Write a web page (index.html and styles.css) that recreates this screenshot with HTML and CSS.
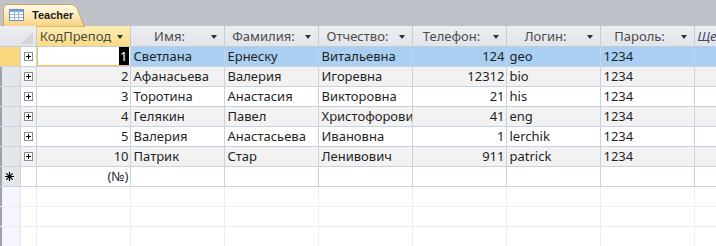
FILE: index.html
```html
<!DOCTYPE html>
<html lang="ru">
<head>
    <meta charset="UTF-8">
    <title>Teacher</title>
    <link rel="stylesheet" href="styles.css">
</head>
<body>
    <div class="tabbar">
        <div class="tab">
            <svg class="tab-bg" width="82" height="23" viewBox="0 0 82 23">
                <defs>
                    <linearGradient id="tabfill" x1="0" y1="0" x2="0" y2="1">
                        <stop offset="0" stop-color="#fefaea"/>
                        <stop offset="0.5" stop-color="#fce9b8"/>
                        <stop offset="1" stop-color="#f8cf7d"/>
                    </linearGradient>
                </defs>
                <path d="M0.5 23 V5 Q0.5 0.5 5 0.5 H68 Q72 0.5 74 4 L81.5 23 Z" fill="url(#tabfill)" stroke="#c9a45c"/>
            </svg>
            <svg class="tab-icon" width="15" height="12" viewBox="0 0 15 12">
                <rect x="0.5" y="0.5" width="14" height="11" fill="#fff" stroke="#6f8fbf"/>
                <rect x="1" y="1" width="13" height="2" fill="#7ea6da"/>
                <path d="M1 5.5 H14 M1 8.5 H14 M5.5 3 V11 M9.5 3 V11" stroke="#9fb6d6"/>
            </svg>
            <span class="tab-title">Teacher</span>
        </div>
    </div>

    <table class="sheet">
        <colgroup>
            <col class="c-rs">
            <col class="c-ex">
            <col class="c-f"><col class="c-f"><col class="c-f"><col class="c-f">
            <col class="c-f"><col class="c-f"><col class="c-f">
            <col class="c-last">
        </colgroup>
        <thead>
            <tr>
                <th class="corner" colspan="2"><span class="corner-tri"></span></th>
                <th class="hl"><div class="hd"><span class="hd-text">КодПрепод</span><span class="arrow"></span></div></th>
                <th><div class="hd"><span class="hd-text">Имя:</span><span class="arrow"></span></div></th>
                <th><div class="hd"><span class="hd-text">Фамилия:</span><span class="arrow"></span></div></th>
                <th><div class="hd"><span class="hd-text">Отчество:</span><span class="arrow"></span></div></th>
                <th><div class="hd"><span class="hd-text">Телефон:</span><span class="arrow"></span></div></th>
                <th><div class="hd"><span class="hd-text">Логин:</span><span class="arrow"></span></div></th>
                <th><div class="hd"><span class="hd-text">Пароль:</span><span class="arrow"></span></div></th>
                <th class="add"><div class="hd add-text">Щелкните для добавления</div></th>
            </tr>
        </thead>
        <tbody>
            <tr class="cur">
                <td class="rs"></td>
                <td class="ex"><span class="plus"></span></td>
                <td class="num active"><span class="caret">1</span></td>
                <td>Светлана</td><td>Ернеску</td><td>Витальевна</td>
                <td class="num">124</td><td>geo</td><td>1234</td><td></td>
            </tr>
            <tr class="alt">
                <td class="rs"></td>
                <td class="ex"><span class="plus"></span></td>
                <td class="num">2</td>
                <td>Афанасьева</td><td>Валерия</td><td>Игоревна</td>
                <td class="num">12312</td><td>bio</td><td>1234</td><td></td>
            </tr>
            <tr>
                <td class="rs"></td>
                <td class="ex"><span class="plus"></span></td>
                <td class="num">3</td>
                <td>Торотина</td><td>Анастасия</td><td>Викторовна</td>
                <td class="num">21</td><td>his</td><td>1234</td><td></td>
            </tr>
            <tr class="alt">
                <td class="rs"></td>
                <td class="ex"><span class="plus"></span></td>
                <td class="num">4</td>
                <td>Гелякин</td><td>Павел</td><td>Христофорович</td>
                <td class="num">41</td><td>eng</td><td>1234</td><td></td>
            </tr>
            <tr>
                <td class="rs"></td>
                <td class="ex"><span class="plus"></span></td>
                <td class="num">5</td>
                <td>Валерия</td><td>Анастасьева</td><td>Ивановна</td>
                <td class="num">1</td><td>lerchik</td><td>1234</td><td></td>
            </tr>
            <tr class="alt">
                <td class="rs"></td>
                <td class="ex"><span class="plus"></span></td>
                <td class="num">10</td>
                <td>Патрик</td><td>Стар</td><td>Ленивович</td>
                <td class="num">911</td><td>patrick</td><td>1234</td><td></td>
            </tr>
            <tr class="new">
                <td class="rs">
                    <svg class="star" width="9" height="9" viewBox="0 0 9 9">
                        <path d="M4.5 0 V9 M0 4.5 H9 M1.3 1.3 L7.7 7.7 M7.7 1.3 L1.3 7.7" stroke="#000" stroke-width="1.2"/>
                    </svg>
                </td>
                <td class="ex"></td>
                <td class="num auto">(№)</td>
                <td></td><td></td><td></td><td></td><td></td><td></td><td></td>
            </tr>
            <tr class="blank">
                <td class="rs"></td><td></td><td></td><td></td><td></td><td></td><td></td><td></td><td></td><td></td>
            </tr>
            <tr class="blank">
                <td class="rs"></td><td></td><td></td><td></td><td></td><td></td><td></td><td></td><td></td><td></td>
            </tr>
            <tr class="blank">
                <td class="rs"></td><td></td><td></td><td></td><td></td><td></td><td></td><td></td><td></td><td></td>
            </tr>
        </tbody>
    </table>
</body>
</html>
```

FILE: styles.css
```css
body {
    margin: 0;
    width: 716px;
    height: 246px;
    overflow: hidden;
    background-color: #fff;
    font-family: "Noto Sans", "Liberation Sans", sans-serif;
}

/* Document tab strip */
.tabbar {
    height: 26px;
    background-color: #bfc3c9;
    padding: 4px 0 0 3px;
    box-sizing: border-box;
    display: flex;
    align-items: flex-end;
}
.tab {
    position: relative;
    width: 82px;
    height: 22px;
    display: flex;
    align-items: center;
}
.tab-bg {
    position: absolute;
    left: 0;
    top: 0;
}
.tab-icon {
    position: relative;
    margin-left: 6px;
    margin-bottom: 1px;
}
.tab-title {
    position: relative;
    margin-left: 8px;
    font-family: "Liberation Sans", Arial, sans-serif;
    font-weight: bold;
    font-size: 11px;
    color: #1e1e1e;
}

/* Datasheet */
.sheet {
    border-collapse: collapse;
    table-layout: fixed;
    width: 774px;
    font-size: 13px;
    color: #1f1f1f;
}
.c-rs { width: 20px; }
.c-ex { width: 16px; }
.c-f { width: 94px; }
.c-last { width: 80px; }

.sheet th {
    height: 20px;
    padding: 0;
    background: linear-gradient(#eceef2, #e1e4e9);
    border-right: 1px solid #c6ccd4;
    border-bottom: 1px solid #c6ccd4;
    font-weight: normal;
    color: #4b4b4b;
}
.sheet th.hl {
    background: linear-gradient(#fdedb5, #fbdc84);
}
.sheet th.corner {
    position: relative;
}
.corner-tri {
    position: absolute;
    right: 3px;
    bottom: 2px;
    width: 0;
    height: 0;
    border-left: 12px solid transparent;
    border-bottom: 12px solid #d2d6dc;
}
.hd {
    display: flex;
    align-items: center;
    white-space: nowrap;
    overflow: hidden;
}
.hd-text {
    flex: 1;
    text-align: center;
    padding-left: 2px;
}
.arrow {
    width: 0;
    height: 0;
    margin: 1px 7px 0 4px;
    border-left: 3.5px solid transparent;
    border-right: 3.5px solid transparent;
    border-top: 4px solid #333;
}
.add-text {
    padding-left: 3px;
    font-style: italic;
    color: #3d4a66;
}

.sheet td {
    height: 19px;
    padding: 0 2px 0 3px;
    border-right: 1px solid #c8d2e0;
    border-bottom: 1px solid #c8d2e0;
    white-space: nowrap;
    overflow: hidden;
    line-height: 19px;
}
.sheet td.num {
    text-align: right;
    padding-right: 1px;
}
.sheet td.rs {
    padding: 0;
    background-color: #e3e6ea;
    box-shadow: inset 2px 0 0 #9ea3a9;
    text-align: center;
}
.sheet td.ex {
    padding: 0;
    text-align: center;
}
.plus {
    display: inline-block;
    position: relative;
    width: 7px;
    height: 7px;
    border: 1px solid #8c8c8c;
    background-color: #fff;
    vertical-align: middle;
    margin-bottom: 2px;
}
.plus::before,
.plus::after {
    content: "";
    position: absolute;
    background-color: #000;
}
.plus::before {
    left: 1px;
    top: 3px;
    width: 5px;
    height: 1px;
}
.plus::after {
    left: 3px;
    top: 1px;
    width: 1px;
    height: 5px;
}

tr.alt td {
    background-color: #f2f2f2;
}
tr.cur td {
    background-color: #a9cff2;
}
tr.cur td.rs {
    background-color: #f9d97f;
    box-shadow: none;
}
tr.cur td.ex {
    background-color: #fff;
}
tr.cur td.active {
    background-color: #fff;
    box-shadow: inset 1px 0 0 #f0c455, inset 0 -1px 0 #f0c455;
}
.caret {
    background-color: #000;
    color: #fff;
    padding: 0 1px;
}
.star {
    vertical-align: middle;
    margin-bottom: 2px;
}
.auto {
    color: #2a2a3a;
}

tr.blank td {
    border-right-color: #eeeeee;
    border-bottom-color: #eeeeee;
}
tr.blank td.rs {
    background-color: #f4f5fd;
    border-right-color: #e4e6ee;
}
```
